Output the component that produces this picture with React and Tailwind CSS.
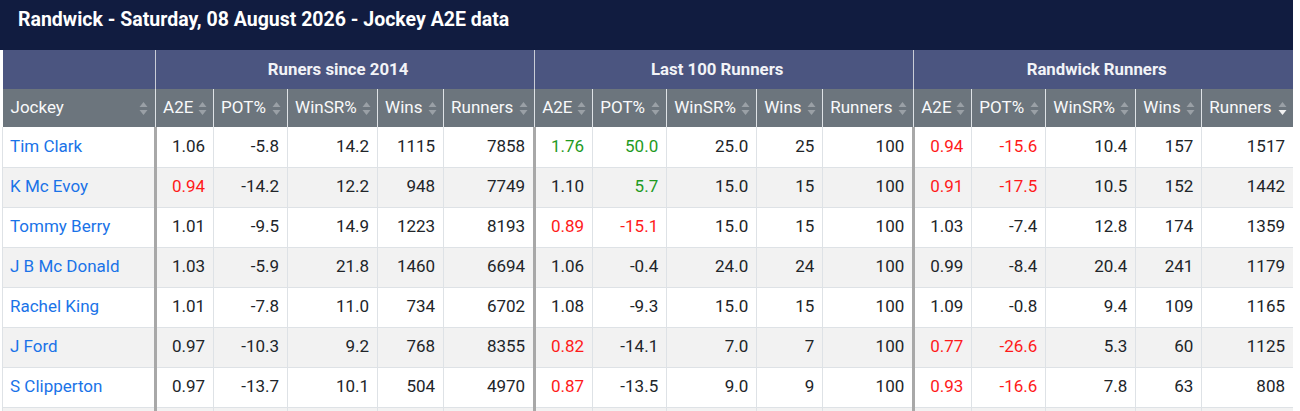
const GROUPS = ['Runers since 2014', 'Last 100 Runners', 'Randwick Runners']
const SUBCOLS = [
  { label: 'A2E', w: 58 },
  { label: 'POT%', w: 74 },
  { label: 'WinSR%', w: 90 },
  { label: 'Wins', w: 66 },
  { label: 'Runners', w: 91 },
]

// r = red, g = green
const ROWS = [
  ['Tim Clark', ['1.06', '-5.8', '14.2', '1115', '7858'], ['1.76g', '50.0g', '25.0', '25', '100'], ['0.94r', '-15.6r', '10.4', '157', '1517']],
  ['K Mc Evoy', ['0.94r', '-14.2', '12.2', '948', '7749'], ['1.10', '5.7g', '15.0', '15', '100'], ['0.91r', '-17.5r', '10.5', '152', '1442']],
  ['Tommy Berry', ['1.01', '-9.5', '14.9', '1223', '8193'], ['0.89r', '-15.1r', '15.0', '15', '100'], ['1.03', '-7.4', '12.8', '174', '1359']],
  ['J B Mc Donald', ['1.03', '-5.9', '21.8', '1460', '6694'], ['1.06', '-0.4', '24.0', '24', '100'], ['0.99', '-8.4', '20.4', '241', '1179']],
  ['Rachel King', ['1.01', '-7.8', '11.0', '734', '6702'], ['1.08', '-9.3', '15.0', '15', '100'], ['1.09', '-0.8', '9.4', '109', '1165']],
  ['J Ford', ['0.97', '-10.3', '9.2', '768', '8355'], ['0.82r', '-14.1', '7.0', '7', '100'], ['0.77r', '-26.6r', '5.3', '60', '1125']],
  ['S Clipperton', ['0.97', '-13.7', '10.1', '504', '4970'], ['0.87r', '-13.5', '9.0', '9', '100'], ['0.93r', '-16.6r', '7.8', '63', '808']],
]

function SortIcon({ active }) {
  return (
    <svg width="9" height="15" viewBox="0 0 9 15" className="shrink-0">
      <path d="M4.5 1 L8.5 6 L0.5 6 Z" fill="#9aa0a6" />
      <path d="M0.5 9 L8.5 9 L4.5 14 Z" fill={active ? '#f1f1f1' : '#9aa0a6'} />
    </svg>
  )
}

function Cell({ value, first, shade }) {
  const color = value.endsWith('r') ? 'text-[#ff1a1a]' : value.endsWith('g') ? 'text-[#1f9a1f]' : 'text-[#212529]'
  const text = value.replace(/[rg]$/, '')
  return (
    <td className={`h-[40px] pl-2 pr-[8px] text-right border-b border-[#dee2e6] ${first ? 'border-l-[3px] border-l-[#a8a8a8]' : 'border-l border-l-[#dee2e6]'} ${color} ${shade}`}>
      {text}
    </td>
  )
}

export default function App() {
  return (
    <div className="w-[1300px] h-[411px] overflow-hidden bg-white" style={{ fontFamily: 'Roboto, "Liberation Sans", sans-serif' }}>
      <div className="w-[1293px]">
        <div className="h-[50px] bg-[#111c40] flex items-center pl-[18px] pb-[10px]">
          <h1 className="text-white font-bold text-[19.5px]">Randwick - Saturday, 08 August 2026 - Jockey A2E data</h1>
        </div>
        <table className="table-fixed border-collapse ml-[2px] w-[1291px] text-[17px]">
          <colgroup>
            <col style={{ width: 153 }} />
            {GROUPS.map(g => SUBCOLS.map(c => <col key={g + c.label} style={{ width: c.w }} />))}
          </colgroup>
          <thead>
            <tr className="h-[39px] bg-[#4b5580]">
              <th />
              {GROUPS.map(g => (
                <th key={g} colSpan={5} className="border-l border-l-[#c9ccd6] pr-[14px] text-center font-bold text-[16.8px] text-[#f2f3f7]">
                  {g}
                </th>
              ))}
            </tr>
            <tr className="h-[38px] bg-[#6c757d] text-[#f8f9fa]">
              <th className="pl-[8px] pr-[7px] font-normal text-left">
                <div className="flex items-center justify-between">
                  <span>Jockey</span>
                  <SortIcon />
                </div>
              </th>
              {GROUPS.map((g, gi) => SUBCOLS.map((c, ci) => (
                <th key={g + c.label} className="border-l border-l-[#dee2e6] pl-[7px] pr-[6px] font-normal text-left">
                  <div className="flex items-center justify-between">
                    <span>{c.label}</span>
                    <SortIcon active={gi === 2 && ci === 4} />
                  </div>
                </th>
              )))}
            </tr>
          </thead>
          <tbody>
            {ROWS.map(([name, ...groups], i) => {
              const shade = i % 2 ? 'bg-[#f2f2f2]' : 'bg-white'
              return (
                <tr key={name}>
                  <td className={`h-[40px] pl-[7px] pr-2 border-b border-l border-[#dee2e6] text-[#1a73e8] ${shade}`}>{name}</td>
                  {groups.map((vals, gi) => vals.map((v, ci) => (
                    <Cell key={gi + '-' + ci} value={v} first={ci === 0} shade={shade} />
                  )))}
                </tr>
              )
            })}
            <tr>
              <td className="h-[40px] border-l border-[#dee2e6] bg-[#f2f2f2]" />
              {GROUPS.map((g, gi) => SUBCOLS.map((c, ci) => (
                <Cell key={gi + '-' + ci} value="" first={ci === 0} shade="bg-[#f2f2f2]" />
              )))}
            </tr>
          </tbody>
        </table>
      </div>
    </div>
  )
}
